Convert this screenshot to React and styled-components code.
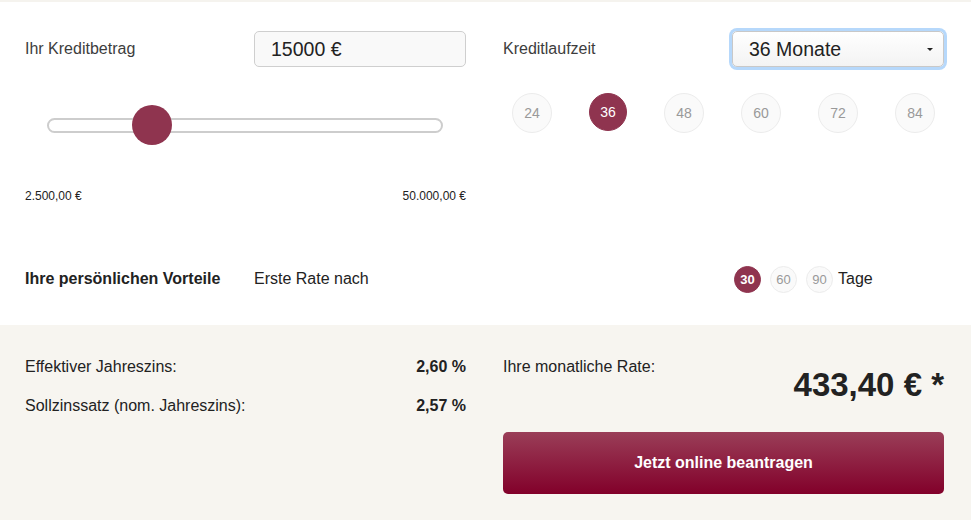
import styled, { createGlobalStyle } from "styled-components";

const GlobalStyle = createGlobalStyle`
  html, body {
    margin: 0;
    padding: 0;
    background: #fff;
  }
  body {
    font-family: "Liberation Sans", Arial, sans-serif;
    color: #222;
  }
`;

const Calculator = styled.div`
  width: 971px;
  height: 520px;
  border-top: 2px solid #f5f3ee;
  box-sizing: border-box;
  display: flex;
  flex-direction: column;
`;

const TopSection = styled.section`
  background: #fff;
  padding: 29px 27px 32px 25px;
`;

const Columns = styled.div`
  display: grid;
  grid-template-columns: 441px 441px;
  column-gap: 37px;
`;

const Column = styled.div`
  display: flex;
  flex-direction: column;
  padding-top: ${(p) => p.$offset || 0}px;
`;

const FieldRow = styled.div`
  display: grid;
  grid-template-columns: ${(p) => p.$labelWidth}px 1fr;
  align-items: center;
  height: 36px;
`;

const Label = styled.span`
  font-size: 16px;
  color: #3d3d3d;
`;

const AmountInput = styled.div`
  height: 36px;
  box-sizing: border-box;
  border: 1px solid #cfcfcf;
  border-radius: 5px;
  background: #f9f9f9;
  padding-left: 16px;
  display: flex;
  align-items: center;
  font-size: 19.5px;
  color: #222;
`;

const Select = styled.div`
  height: 36px;
  box-sizing: border-box;
  border: 1px solid #c8c8c8;
  border-radius: 5px;
  background: linear-gradient(#ffffff, #f3f3f3);
  box-shadow: 0 0 0 3px #b6d8fb;
  padding: 0 10px 0 16px;
  display: flex;
  align-items: center;
  justify-content: space-between;
  font-size: 19.5px;
  color: #222;
  margin-left: 2px;
`;

const Caret = styled.span`
  width: 0;
  height: 0;
  border-left: 3px solid transparent;
  border-right: 3px solid transparent;
  border-top: 3px solid #222;
`;

const SliderWrap = styled.div`
  margin: 38px 23px 0 22px;
  height: 40px;
  display: flex;
  align-items: center;
  position: relative;
`;

const Track = styled.div`
  flex: 1;
  height: 15px;
  box-sizing: border-box;
  border: 2px solid #cdcdcd;
  border-radius: 8px;
  background: #fff;
`;

const Thumb = styled.div`
  position: absolute;
  top: 0;
  width: 40px;
  height: 40px;
  border-radius: 50%;
  background: #8f344f;
`;

const RangeLabels = styled.div`
  margin-top: 45px;
  display: flex;
  justify-content: space-between;
  font-size: 12px;
  line-height: 13px;
  color: #222;
`;

const TermRow = styled.div`
  margin-top: 26px;
  padding: 0 9px;
  display: flex;
  justify-content: space-between;
`;

const TermBubble = styled.div`
  width: ${(p) => p.$size}px;
  height: ${(p) => p.$size}px;
  box-sizing: border-box;
  border-radius: 50%;
  display: flex;
  align-items: center;
  justify-content: center;
  font-size: ${(p) => (p.$size > 30 ? 14 : 13)}px;
  font-weight: ${(p) => (p.$bold ? "bold" : "normal")};
  color: ${(p) => (p.$active ? "#fff" : "#999")};
  background: ${(p) => (p.$active ? "#8f344f" : "#fafafa")};
  border: 1px solid ${(p) => (p.$active ? "#8f344f" : "#ececec")};
`;

const PerkRow = styled.div`
  margin-top: 62px;
  display: grid;
  grid-template-columns: 229px 212px 264px 1fr;
  align-items: center;
  height: 28px;
`;

const PerkTitle = styled.span`
  font-size: 16px;
  font-weight: bold;
  color: #222;
`;

const PerkText = styled.span`
  font-size: 16px;
  color: #222;
`;

const DayPicker = styled.div`
  display: flex;
  align-items: center;
  gap: 9px;
  margin-left: 4px;
`;

const DayUnit = styled.span`
  font-size: 16px;
  color: #222;
  margin-left: -4px;
`;

const BottomSection = styled.section`
  flex: 1;
  background: #f7f5f0;
  padding: 26px 27px 26px 25px;
`;

const RateRow = styled.div`
  display: flex;
  justify-content: space-between;
  align-items: center;
  height: 28px;
  margin-bottom: 11px;
  font-size: 16px;
  color: #222;
`;

const RateValue = styled.span`
  font-weight: bold;
`;

const MonthlyHead = styled.div`
  display: flex;
  justify-content: space-between;
  align-items: flex-start;
  font-size: 16px;
  line-height: 20px;
  color: #222;
  padding-top: 6px;
`;

const MonthlyAmount = styled.span`
  font-size: 33px;
  line-height: 33px;
  font-weight: bold;
  color: #222;
  margin-top: 11px;
`;

const ApplyButton = styled.button`
  margin-top: 31px;
  width: 100%;
  height: 62px;
  border: none;
  border-radius: 5px;
  background: linear-gradient(#9a3e58, #82002a);
  color: #fff;
  font-family: "Liberation Sans", Arial, sans-serif;
  font-size: 16px;
  font-weight: bold;
  cursor: pointer;
`;

const terms = [24, 36, 48, 60, 72, 84];
const days = [30, 60, 90];

export default function App() {
  const amount = 15000;
  const min = 2500;
  const max = 50000;
  // thumb sits over the track, its left taken from the amount
  const thumbLeft = ((amount - min) / (max - min)) * 323;

  return (
    <>
      <GlobalStyle />
      <Calculator>
        <TopSection>
          <Columns>
            <Column>
              <FieldRow $labelWidth={229}>
                <Label>Ihr Kreditbetrag</Label>
                <AmountInput>15000 €</AmountInput>
              </FieldRow>
              <SliderWrap>
                <Track />
                <Thumb style={{ left: thumbLeft }} />
              </SliderWrap>
              <RangeLabels>
                <span>2.500,00 €</span>
                <span>50.000,00 €</span>
              </RangeLabels>
            </Column>
            <Column>
              <FieldRow $labelWidth={227}>
                <Label>Kreditlaufzeit</Label>
                <Select>
                  36 Monate
                  <Caret />
                </Select>
              </FieldRow>
              <TermRow>
                {terms.map((t) => (
                  <TermBubble key={t} $size={t === 36 ? 38 : 40} $active={t === 36}>
                    {t}
                  </TermBubble>
                ))}
              </TermRow>
            </Column>
          </Columns>
          <PerkRow>
            <PerkTitle>Ihre persönlichen Vorteile</PerkTitle>
            <PerkText>Erste Rate nach</PerkText>
            <span />
            <DayPicker>
              {days.map((d) => (
                <TermBubble key={d} $size={27} $active={d === 30} $bold={d === 30}>
                  {d}
                </TermBubble>
              ))}
              <DayUnit>Tage</DayUnit>
            </DayPicker>
          </PerkRow>
        </TopSection>
        <BottomSection>
          <Columns>
            <Column $offset={2}>
              <RateRow>
                <span>Effektiver Jahreszins:</span>
                <RateValue>2,60 %</RateValue>
              </RateRow>
              <RateRow>
                <span>Sollzinssatz (nom. Jahreszins):</span>
                <RateValue>2,57 %</RateValue>
              </RateRow>
            </Column>
            <Column>
              <MonthlyHead>
                <span>Ihre monatliche Rate:</span>
                <MonthlyAmount>433,40 € *</MonthlyAmount>
              </MonthlyHead>
              <ApplyButton>Jetzt online beantragen</ApplyButton>
            </Column>
          </Columns>
        </BottomSection>
      </Calculator>
    </>
  );
}
